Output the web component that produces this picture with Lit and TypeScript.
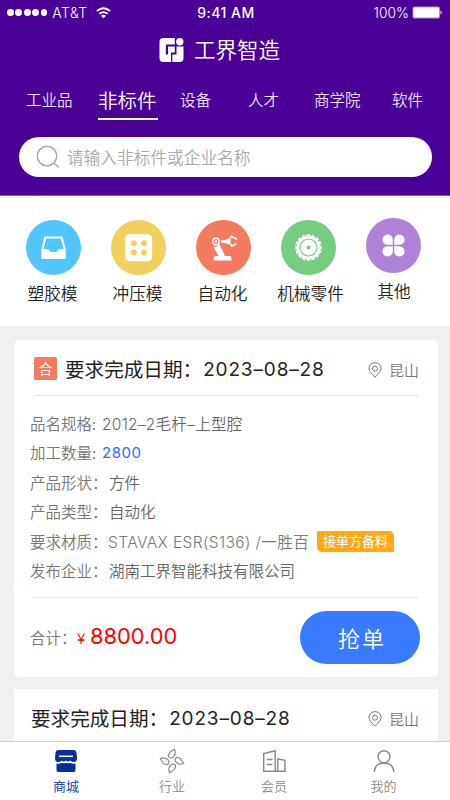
import { LitElement, html, svg, css } from "lit";
import { customElement, property } from "lit/decorators.js";
import { classMap } from "lit/directives/class-map.js";

const logo = html`<svg class="logo" width="25" height="26" viewBox="0 0 25 26">
  <path fill="#fff" d="M4.200 1H15.800V7.400H6.800V17.500H9V9.500H15.800V15.500H12V25H4.200Q0.500 25 0.500 21V5Q0.500 1 4.200 1ZM17.500 9.500H24.500V21Q24.500 25 20.500 25H13.300V17.500H17.500Z"/>
  <circle cx="20.800" cy="4.800" r="3.700" fill="#fff"/></svg>`;

const wifi = html`<svg width="15" height="12" viewBox="0 0 15 12" fill="none" stroke="#fff" stroke-width="1.700">
  <path d="M.8 4.200Q7.500-1.700 14.200 4.200M3.200 6.900Q7.500 3.200 11.800 6.900"/><path d="M7.500 11.200L5 8.700Q7.500 6.800 10 8.700Z" fill="#fff" stroke="none"/></svg>`;

const battery = html`<svg width="31" height="13" viewBox="0 0 31 13">
  <rect x=".5" y=".5" width="27.500" height="12" rx="2" fill="#b08ed4"/><rect x="1.500" y="1.500" width="25.500" height="10" rx="1" fill="#fff"/><path d="M28.500 4.200Q31 6.500 28.500 8.800Z" fill="#e8dcf4"/></svg>`;

const magnifier = html`<svg width="25" height="24" viewBox="0 0 25 24" fill="none" stroke="#aaa" stroke-width="1.500">
  <circle cx="11" cy="11" r="9.700"/><path d="M18 18L23 22.500"/></svg>`;

const pin = html`<svg width="14" height="16" viewBox="0 0 14 16" fill="none" stroke="#777" stroke-width="1">
  <path d="M7 15.200Q1 9.700 1 6.500A6 5.900 0 0 1 13 6.500Q13 9.700 7 15.200Z"/><circle cx="7" cy="6.700" r="2.500"/></svg>`;

const teeth = Array.from({ length: 16 }, (_, i) => i * 22.5);
const categoryIcons: Record<string, unknown> = {
  tray: html`<svg width="55" height="55" viewBox="0 0 55 55"><path fill="#fff" fill-rule="evenodd" d="M18.500 16.500H36.500L39.800 30V39H15.200V30ZM20.200 18.500L17.500 29H22L24.500 32H30.500L33 29H37.500L34.800 18.500Z"/></svg>`,
  press: html`<svg width="55" height="55" viewBox="0 0 55 55"><rect x="14.200" y="14.200" width="27" height="27" rx="4.500" fill="#fff"/>
    <g fill="#f1d15c"><circle cx="22.800" cy="23.300" r="3"/><circle cx="33" cy="23.300" r="3"/><circle cx="22.800" cy="32.600" r="3"/><circle cx="33" cy="32.600" r="3"/></g></svg>`,
  robot: html`<svg width="55" height="55" viewBox="0 0 55 55"><circle cx="20" cy="21.500" r="3.200" fill="none" stroke="#fff" stroke-width="1.400"/><circle cx="20" cy="21.500" r="1.300" fill="#fff"/>
    <path fill="#fff" d="M25 20H29.500L32 18.500L34.500 19.500V23.500L32 24.500L29.500 23H25ZM17.500 27Q20.500 27 23.500 24.500L28.500 34.500V36H33.500Q35.500 36 35.500 38V40.500H17.500V38Q17.500 36 19.500 36H22.500Z"/>
    <path fill="none" stroke="#fff" stroke-width="1.500" d="M33.500 20L35.500 16L41 19.500M33.500 23L36 26L40.500 23.500"/></svg>`,
  gear: html`<svg width="55" height="55" viewBox="0 0 55 55"><circle cx="27.500" cy="27.500" r="11.800" fill="#fff"/>
    ${teeth.map((a) => svg`<path fill="#fff" transform="rotate(${a} 27.5 27.5)" d="M25.800 17V14L29.500 14.500L28.800 17Z"/>`)}
    <circle cx="27.500" cy="27.500" r="8.500" fill="none" stroke="#76cd80" stroke-width="1.100"/><circle cx="27.500" cy="27.500" r="1.900" fill="#76cd80"/></svg>`,
  clover: html`<svg width="55" height="55" viewBox="0 0 55 55" fill="#fff"><path d="M26.800 26.800H21.500A5.200 5.200 0 1 1 26.800 21.500ZM28.200 26.800V21.500A5.200 5.200 0 1 1 33.500 26.800ZM26.800 28.200V33.500A5.200 5.200 0 1 1 21.500 28.200ZM28.200 28.200H33.500A5.200 5.200 0 1 1 28.200 33.500Z"/></svg>`,
};

const navIcons: Record<string, unknown> = {
  shop: html`<svg width="26" height="26" viewBox="0 0 26 26"><path fill="#062f9c" d="M5 2H21Q23 2 23.500 5L24 10Q24 14 21 14Q18.500 14 17.500 12.500Q15.500 14.500 13 12.500Q10.500 14.500 8.500 12.500Q7.500 14 5 14Q2 14 2 10L2.500 5Q3 2 5 2ZM3.500 15.500Q7 16 8.500 14.700Q10.500 16 13 14.700Q15.500 16 17.500 14.700Q19 16 22.500 15.500V22Q22.500 24 21 24H5Q3.500 24 3.500 22Z"/><path stroke="#fff" stroke-width="1.500" d="M6 8.300H20"/></svg>`,
  petals: html`<svg width="26" height="26" viewBox="0 0 26 26" fill="none" stroke="#888" stroke-width="1.200">
    ${[0, 90, 180, 270].map((a) => svg`<path transform="rotate(${a} 13 13)" d="M15.500 1.300Q17.500 6.500 13.800 9.300Q11 10.800 9.500 8.500Q8.500 5 15.500 1.300Z"/>`)}</svg>`,
  building: html`<svg width="26" height="26" viewBox="0 0 26 26" fill="none" stroke="#888" stroke-width="1.400"><path d="M2.700 23.200V5.500L14.200 2.700V23.200ZM16.800 23.200V10.800L23.900 12.300V23.200H14.200M5.700 11.500H11.500M5.700 16.500H11.500"/></svg>`,
  person: html`<svg width="26" height="26" viewBox="0 0 26 26" fill="none" stroke="#888" stroke-width="1.400"><circle cx="13" cy="8.800" r="6"/><path d="M3.200 24Q4 15 13 15Q22 15 23 24"/></svg>`,
};

@customElement("order-heading")
class OrderHeading extends LitElement {
  @property() date = "";
  @property() place = "";
  @property({ type: Boolean }) badge = false;

  static styles = css`
    :host { display: flex; align-items: center; color: #222; font-size: 19.600px; line-height: 28px; white-space: nowrap; }
    .badge { width: 23px; height: 23px; border-radius: 2px; background: #f47a60; color: #fff; font-size: 14px; line-height: 22px; text-align: center; margin: 0 8px 0 3px; }
    .label { font-weight: 400; }
    .date { font-family: Inter, sans-serif; font-size: 19px; letter-spacing: 0.850px; font-weight: 400; margin: 2px 0 0 1px; }
    .place { display: flex; align-items: center; gap: 7px; margin-left: auto; margin-top: 3px; color: #777; font-size: 15px; }
    svg { display: block; }
  `;
  render() {
    return html`${this.badge ? html`<span class="badge">合</span>` : ""}
      <span class="label">要求完成日期：</span><span class="date">${this.date}</span>
      <span class="place">${pin}<span>${this.place}</span></span>`;
  }
}

@customElement("app-root")
class AppRoot extends LitElement {
  static styles = css`
    :host { display: flex; flex-direction: column; width: 450px; height: 800px; overflow: hidden; background: #f0f0f0; font-family: "Noto Sans CJK SC", sans-serif; font-weight: 350; color: #222; white-space: nowrap; }
    * { box-sizing: border-box; }
    svg { display: block; flex: none; }
    .header { height: 196px; flex: none; background: #4b0096; border-bottom: 1px solid #8459b5; color: #fff; }
    .status { display: grid; grid-template-columns: 1fr auto 1fr; align-items: center; height: 25px; padding: 0 7px; font-family: Inter, sans-serif; }
    .carrier, .power { display: flex; align-items: center; }
    .power { justify-content: flex-end; gap: 3px; font-size: 13.800px; }
    .dots { display: flex; gap: 1.600px; margin-right: 5px; }
    .dot { width: 6.800px; height: 6.800px; border-radius: 50%; background: #fff; }
    .network { margin-right: 8px; font-weight: 300; font-size: 14px; letter-spacing: 0.450px; }
    .clock { font-weight: 500; font-size: 14px; letter-spacing: 0.500px; margin-left: 2px; }
    .brand { display: flex; justify-content: center; align-items: center; height: 50px; gap: 10px; font-size: 21.500px; line-height: 28px; margin-left: -11px; }
    .brand span { margin-top: -2px; }
    .tabs { display: grid; grid-template-columns: 72px 82px 68px 66px 78px 1fr; height: 46px; padding-left: 26px; align-items: center; font-size: 15.500px; color: #ece2f8; }
    .tab { padding-top: 2px; }
    .tab.active { font-size: 19.500px; color: #fff; height: 44px; line-height: 47px; width: 60px; padding: 0; margin-top: -1px; border-bottom: 2px solid #fff; }
    .search { display: flex; align-items: center; gap: 6px; width: 413px; height: 40px; margin: 16px 0 0 19px; padding-left: 17px; border-radius: 20px; background: #fff; color: #aaa; font-size: 16.700px; }
    .categories { display: flex; height: 130px; flex: none; padding: 24px 0 0 11px; background: #fff; }
    .category { width: 85px; display: flex; flex-direction: column; align-items: center; font-size: 16.700px; line-height: 25px; gap: 6px; }
    .category.raised { margin-top: -2px; }
    .category:nth-child(-n + 3) span { margin-left: -2px; }
    .category:nth-child(4) span { margin-left: 4px; }
    .category:nth-child(5) span { margin-left: 1px; }
    .disc { width: 55px; height: 55px; border-radius: 50%; }
    .tray { background: #52c5ff; } .press { background: #f1d15c; } .robot { background: #f47a60; } .gear { background: #76cd80; } .clover { background: #ad82d8; }
    .card { width: 424px; flex: none; margin: 14px 0 0 14px; height: 337px; border-radius: 5px; background: #fff; padding: 13px 19px 0 17px; }
    .rule { height: 1px; background: #e6e6e6; margin: 11px 0 0 3px; }
    .rule.lower { margin-top: 12px; }
    .rows { display: flex; flex-direction: column; padding-top: 12px; margin-left: -1px; }
    .row { display: flex; align-items: center; height: 29.500px; font-size: 15.500px; color: #666; }
    .key { width: 72px; color: #777; }
    .key.wide { width: 79px; }
    .latin { font-family: Inter, "Noto Sans CJK SC", sans-serif; font-size: 15.500px; letter-spacing: 0.270px; }
    .material { letter-spacing: 0.400px; margin-left: -1px; color: #777; }
    .quantity { color: #2a6dff; font-weight: 400; font-size: 15px; letter-spacing: 0.500px; }
    .tag { width: 77px; height: 21px; margin-left: auto; margin-right: 25px; border-radius: 0 5px 0 5px; background: #ffa914; color: #fff; font-size: 13px; font-weight: 400; line-height: 20px; text-align: center; margin-top: 1px; }
    .total { display: flex; align-items: center; height: 79px; color: #777; font-size: 15.500px; margin-left: -1px; }
    .sum { width: 47px; margin-top: -2px; }
    .price { color: #f00; font-family: Inter, sans-serif; font-weight: 400; font-size: 21.800px; margin-top: -3px; }
    .yen { color: #f00; font-size: 15px; width: 13px; margin-top: -1px; }
    .grab { width: 120px; height: 53px; margin: 0 -1px 0 auto; border: 0; border-radius: 27px; background: #397aff; color: #fff; font: inherit; font-size: 22px; letter-spacing: 2px; padding: 0 0 2px 4px; }
    .next { height: 52px; margin-top: 12px; border-radius: 0; }
    .nav { display: grid; grid-template-columns: 106px 106px 98px 121px; height: 59px; flex: none; border-top: 1px solid #d0d0d0; background: #fff; padding-left: 13px; }
    .item { display: flex; flex-direction: column; align-items: center; padding-top: 6px; gap: 2px; font-size: 13px; line-height: 20px; color: #888; }
    .item.active { color: #062f9c; }
  `;

  tabs = ["工业品", "非标件", "设备", "人才", "商学院", "软件"];
  categories = [["tray", "塑胶模"], ["press", "冲压模"], ["robot", "自动化"], ["gear", "机械零件"], ["clover", "其他"]];
  nav = [["shop", "商城"], ["petals", "行业"], ["building", "会员"], ["person", "我的"]];

  render() {
    return html`
      <header class="header">
        <div class="status">
          <div class="carrier"><span class="dots">${[1, 2, 3, 4, 5].map(() => html`<i class="dot"></i>`)}</span><span class="network">AT&amp;T</span>${wifi}</div>
          <span class="clock">9:41 AM</span>
          <div class="power"><span>100%</span>${battery}</div>
        </div>
        <div class="brand">${logo}<span>工界智造</span></div>
        <nav class="tabs">${this.tabs.map((t, i) => html`<span class=${classMap({ tab: true, active: i === 1 })}>${t}</span>`)}</nav>
        <div class="search">${magnifier}<span>请输入非标件或企业名称</span></div>
      </header>
      <section class="categories">
        ${this.categories.map(([icon, name]) => html`<div class=${classMap({ category: true, raised: icon === "clover" })}><div class="disc ${icon}">${categoryIcons[icon]}</div><span>${name}</span></div>`)}
      </section>
      <article class="card">
        <order-heading badge date="2023–08–28" place="昆山"></order-heading>
        <div class="rule"></div>
        <div class="rows">
          <div class="row"><span class="key">品名规格:</span><span class="latin">2012–2毛杆–上型腔</span></div>
          <div class="row"><span class="key">加工数量:</span><span class="latin quantity">2800</span></div>
          <div class="row"><span class="key wide">产品形状：</span><span>方件</span></div>
          <div class="row"><span class="key wide">产品类型：</span><span>自动化</span></div>
          <div class="row"><span class="key wide">要求材质：</span><span class="latin material">STAVAX ESR(S136) /一胜百</span><span class="tag">接单方备料</span></div>
          <div class="row"><span class="key wide">发布企业：</span><span>湖南工界智能科技有限公司</span></div>
        </div>
        <div class="rule lower"></div>
        <div class="total"><span class="sum">合计：</span><span class="yen">¥</span><span class="price">8800.00</span><button class="grab">抢单</button></div>
      </article>
      <article class="card next"><order-heading date="2023–08–28" place="昆山"></order-heading></article>
      <nav class="nav">${this.nav.map(([icon, name], i) => html`<div class=${classMap({ item: true, active: i === 0 })}>${navIcons[icon]}<span>${name}</span></div>`)}</nav>
    `;
  }
}
